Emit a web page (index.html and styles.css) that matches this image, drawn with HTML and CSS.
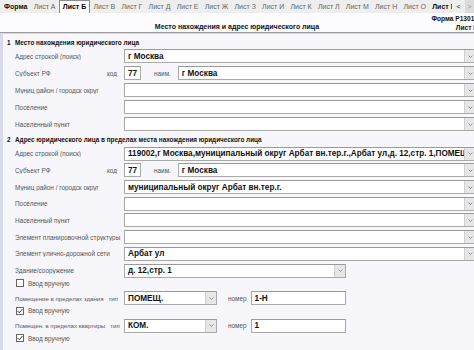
FILE: index.html
```html
<!DOCTYPE html>
<html lang="ru">
<head>
    <meta charset="UTF-8">
    <meta name="viewport" content="width=device-width, initial-scale=1.0">
    <title>Лист Б</title>
    <link rel="stylesheet" href="styles.css">
</head>
<body>
<div class="page">
    <div class="tabbar">
        <div class="tabs">
            <span class="tab strong">Форма</span>
            <span class="tab">Лист А</span>
            <span class="tab active">Лист Б</span>
            <span class="tab">Лист В</span>
            <span class="tab">Лист Г</span>
            <span class="tab">Лист Д</span>
            <span class="tab">Лист Е</span>
            <span class="tab">Лист Ж</span>
            <span class="tab">Лист З</span>
            <span class="tab">Лист И</span>
            <span class="tab">Лист К</span>
            <span class="tab">Лист Л</span>
            <span class="tab">Лист М</span>
            <span class="tab">Лист Н</span>
            <span class="tab">Лист О</span>
            <span class="tab strong">Лист П</span>
        </div>
        <span class="nav">&lt;</span>
        <span class="nav nav-box">&gt;</span>
    </div>

    <div class="header">
        <div class="title">Место нахождения и адрес юридического лица</div>
        <div class="meta">
            <div>Форма Р13014</div>
            <div>Лист Б</div>
        </div>
    </div>

    <div class="form">
        <!-- Section 1 -->
        <div class="section first">
            <div class="section-title"><span class="num">1</span>Место нахождения юридического лица</div>
            <div class="row">
                <div class="label">Адрес строкой (поиск)</div>
                <div class="combo"><span class="value">г Москва</span><span class="drop"><svg width="5" height="3" viewBox="0 0 5 3"><path d="M0.5 0.5 L2.5 2.5 L4.5 0.5" fill="none" stroke="#8a8a8a" stroke-width="0.9"/></svg></span></div>
            </div>
            <div class="row">
                <div class="label">Субъект РФ<span>код</span></div>
                <div class="field code"><span class="value">77</span></div>
                <span class="hint name-hint">наим.</span>
                <div class="combo"><span class="value">г Москва</span><span class="drop"><svg width="5" height="3" viewBox="0 0 5 3"><path d="M0.5 0.5 L2.5 2.5 L4.5 0.5" fill="none" stroke="#8a8a8a" stroke-width="0.9"/></svg></span></div>
            </div>
            <div class="row">
                <div class="label">Муниц район / городск округ</div>
                <div class="combo"><span class="value"></span><span class="drop"><svg width="5" height="3" viewBox="0 0 5 3"><path d="M0.5 0.5 L2.5 2.5 L4.5 0.5" fill="none" stroke="#8a8a8a" stroke-width="0.9"/></svg></span></div>
            </div>
            <div class="row">
                <div class="label">Поселение</div>
                <div class="combo"><span class="value"></span><span class="drop"><svg width="5" height="3" viewBox="0 0 5 3"><path d="M0.5 0.5 L2.5 2.5 L4.5 0.5" fill="none" stroke="#8a8a8a" stroke-width="0.9"/></svg></span></div>
            </div>
            <div class="row">
                <div class="label">Населенный пункт</div>
                <div class="combo"><span class="value"></span><span class="drop"><svg width="5" height="3" viewBox="0 0 5 3"><path d="M0.5 0.5 L2.5 2.5 L4.5 0.5" fill="none" stroke="#8a8a8a" stroke-width="0.9"/></svg></span></div>
            </div>
        </div>

        <!-- Section 2 -->
        <div class="section second">
            <div class="section-title"><span class="num">2</span>Адрес юридического лица в пределах места нахождения юридического лица</div>
            <div class="row">
                <div class="label">Адрес строкой (поиск)</div>
                <div class="combo"><span class="value">119002,г Москва,муниципальный округ Арбат вн.тер.г.,Арбат ул,д. 12,стр. 1,ПОМЕЩ. 1-Н,КОМ. 1</span><span class="drop"><svg width="5" height="3" viewBox="0 0 5 3"><path d="M0.5 0.5 L2.5 2.5 L4.5 0.5" fill="none" stroke="#8a8a8a" stroke-width="0.9"/></svg></span></div>
            </div>
            <div class="row">
                <div class="label">Субъект РФ<span>код</span></div>
                <div class="field code"><span class="value">77</span></div>
                <span class="hint name-hint">наим.</span>
                <div class="combo"><span class="value">г Москва</span><span class="drop"><svg width="5" height="3" viewBox="0 0 5 3"><path d="M0.5 0.5 L2.5 2.5 L4.5 0.5" fill="none" stroke="#8a8a8a" stroke-width="0.9"/></svg></span></div>
            </div>
            <div class="row">
                <div class="label">Муниц район / городск округ</div>
                <div class="combo"><span class="value">муниципальный округ Арбат вн.тер.г.</span><span class="drop"><svg width="5" height="3" viewBox="0 0 5 3"><path d="M0.5 0.5 L2.5 2.5 L4.5 0.5" fill="none" stroke="#8a8a8a" stroke-width="0.9"/></svg></span></div>
            </div>
            <div class="row">
                <div class="label">Поселение</div>
                <div class="combo"><span class="value"></span><span class="drop"><svg width="5" height="3" viewBox="0 0 5 3"><path d="M0.5 0.5 L2.5 2.5 L4.5 0.5" fill="none" stroke="#8a8a8a" stroke-width="0.9"/></svg></span></div>
            </div>
            <div class="row">
                <div class="label">Населенный пункт</div>
                <div class="combo"><span class="value"></span><span class="drop"><svg width="5" height="3" viewBox="0 0 5 3"><path d="M0.5 0.5 L2.5 2.5 L4.5 0.5" fill="none" stroke="#8a8a8a" stroke-width="0.9"/></svg></span></div>
            </div>
            <div class="row">
                <div class="label">Элемент планировочной структуры</div>
                <div class="combo"><span class="value"></span><span class="drop"><svg width="5" height="3" viewBox="0 0 5 3"><path d="M0.5 0.5 L2.5 2.5 L4.5 0.5" fill="none" stroke="#8a8a8a" stroke-width="0.9"/></svg></span></div>
            </div>
            <div class="row">
                <div class="label">Элемент улично-дорожной сети</div>
                <div class="combo"><span class="value">Арбат ул</span><span class="drop"><svg width="5" height="3" viewBox="0 0 5 3"><path d="M0.5 0.5 L2.5 2.5 L4.5 0.5" fill="none" stroke="#8a8a8a" stroke-width="0.9"/></svg></span></div>
            </div>
            <div class="row">
                <div class="label">Здание/сооружение</div>
                <div class="combo building"><span class="value">д. 12,стр. 1</span><span class="drop"><svg width="5" height="3" viewBox="0 0 5 3"><path d="M0.5 0.5 L2.5 2.5 L4.5 0.5" fill="none" stroke="#8a8a8a" stroke-width="0.9"/></svg></span></div>
            </div>
            <div class="check-row"><span class="check"></span>Ввод вручную</div>
            <div class="row">
                <div class="label tight">Помещение в пределах здания<span>тип</span></div>
                <div class="combo select"><span class="value">ПОМЕЩ.</span><span class="drop"><svg width="5" height="3" viewBox="0 0 5 3"><path d="M0.5 0.5 L2.5 2.5 L4.5 0.5" fill="none" stroke="#8a8a8a" stroke-width="0.9"/></svg></span></div>
                <span class="hint number-hint">номер</span>
                <div class="field number"><span class="value">1-Н</span></div>
            </div>
            <div class="check-row"><span class="check"><svg width="6" height="6" viewBox="0 0 6 6"><path d="M0.6 3 L2.3 4.8 L5.4 1" fill="none" stroke="#333" stroke-width="1"/></svg></span>Ввод вручную</div>
            <div class="row">
                <div class="label tight">Помещен. в пределах квартиры<span>тип</span></div>
                <div class="combo select"><span class="value">КОМ.</span><span class="drop"><svg width="5" height="3" viewBox="0 0 5 3"><path d="M0.5 0.5 L2.5 2.5 L4.5 0.5" fill="none" stroke="#8a8a8a" stroke-width="0.9"/></svg></span></div>
                <span class="hint number-hint">номер</span>
                <div class="field number"><span class="value">1</span></div>
            </div>
            <div class="check-row"><span class="check"><svg width="6" height="6" viewBox="0 0 6 6"><path d="M0.6 3 L2.3 4.8 L5.4 1" fill="none" stroke="#333" stroke-width="1"/></svg></span>Ввод вручную</div>
        </div>
    </div>
</div>
</body>
</html>
```

FILE: styles.css
```css
/* Form sheet B: address of legal entity */
body {
    margin: 0;
    font-family: "Liberation Sans", Arial, sans-serif;
    background: #f7f7fb;
    overflow: hidden;
}

.page {
    width: 476px;
}

/* Tab strip */
.tabbar {
    display: flex;
    height: 13px;
    background: #eeeeee;
    font-size: 7px;
    color: #666;
    white-space: nowrap;
}

.tabs {
    display: flex;
    flex: 0 0 452px;
    padding-left: 1px;
    box-sizing: border-box;
    overflow: hidden;
}

.tab {
    flex-shrink: 0;
    padding: 0 3.1px;
    line-height: 13px;
}

.tab.strong {
    font-weight: bold;
    color: #111;
}

.tab.active {
    background: #fff;
    border: 1px solid #8c8c8c;
    border-bottom: none;
    font-weight: bold;
    color: #000;
    line-height: 12px;
}

.nav {
    width: 13px;
    line-height: 13px;
    text-align: center;
    color: #222;
}

.nav-box {
    width: 9px;
    background: #dcdcdc;
    color: #999;
}

/* Header */
.header {
    display: grid;
    grid-template-columns: 1fr auto 1fr;
    width: 474px;
    height: 19px;
    background: #fcfcfe;
    border-bottom: 1px solid #9c9c9c;
    box-shadow: 0 1px 0 #d8d8d8;
    font-size: 7px;
    font-weight: bold;
    color: #111;
}

.title {
    grid-column: 2;
    align-self: end;
    padding-bottom: 2px;
    white-space: nowrap;
}

.meta {
    grid-column: 3;
    justify-self: end;
    margin-right: -4px;
    text-align: right;
    font-size: 6.6px;
    line-height: 9px;
    padding-top: 1px;
    white-space: nowrap;
}

/* Form body */
.form {
    border-left: 3px solid #d9d9ee;
    min-height: 320px;
}

.section-title {
    display: flex;
    height: 10px;
    align-items: center;
    padding-left: 4px;
    font-size: 6.4px;
    font-weight: bold;
    color: #111;
    white-space: nowrap;
}

.num {
    width: 8px;
}

.first {
    padding-top: 4px;
}

.first .section-title {
    margin-bottom: -1px;
}

.second {
    padding-top: 3px;
}

.second .row {
    margin-top: 2.7px;
}

.second .section-title {
    margin-bottom: 1.3px;
}

.row {
    display: flex;
    align-items: center;
    height: 14px;
    margin-top: 3px;
}

.label {
    flex: 0 0 121px;
    min-width: 0;
    box-sizing: border-box;
    display: flex;
    justify-content: space-between;
    padding: 0 7px 0 12px;
    font-size: 6.4px;
    color: #555;
    white-space: nowrap;
    overflow: hidden;
}

.label.tight {
    gap: 5px;
    padding-right: 6px;
    font-size: 6.1px;
}

.hint {
    font-size: 6.4px;
    color: #555;
    white-space: nowrap;
}

.combo,
.field {
    height: 14px;
    box-sizing: border-box;
    display: flex;
    align-items: center;
    background: #fff;
    border: 1px solid #aaa;
    border-top-color: #9a9a9a;
    overflow: hidden;
}

.combo {
    flex: 1;
}

.value {
    flex: 1;
    padding-left: 3px;
    font-size: 8.2px;
    font-weight: bold;
    color: #111;
    white-space: nowrap;
    overflow: hidden;
}

.drop {
    flex: 0 0 10px;
    align-self: stretch;
    display: flex;
    align-items: center;
    justify-content: center;
    background: #e7e7e7;
    border-left: 1px solid #cfcfcf;
}

.code {
    width: 17px;
}

.name-hint {
    margin: 0 7px 0 13px;
}

.building {
    flex: 0 0 222px;
}

.select {
    flex: 0 0 93px;
}

.number-hint {
    margin: 0 4px 0 11px;
}

.number {
    width: 95px;
}

/* Manual input checkboxes */
.check-row {
    display: flex;
    align-items: center;
    height: 11px;
    padding-left: 13px;
    font-size: 6.4px;
    color: #555;
}

.check {
    width: 8px;
    height: 8px;
    box-sizing: border-box;
    margin-right: 4px;
    display: flex;
    align-items: center;
    justify-content: center;
    background: #fff;
    border: 1px solid #666;
}
```
